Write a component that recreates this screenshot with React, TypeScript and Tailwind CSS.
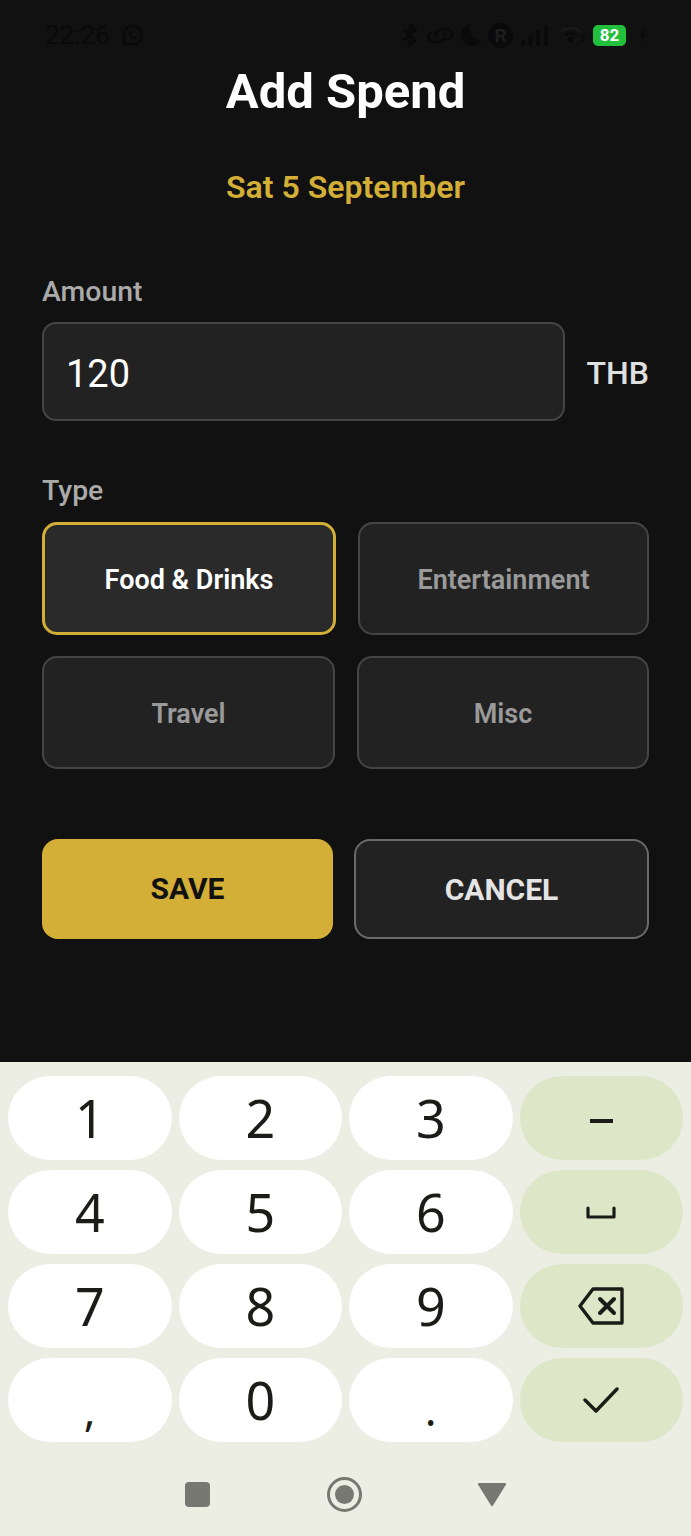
const FONT = "font-['Roboto',sans-serif]";

function StatusBar() {
  return (
    <div className="h-[68px] shrink-0 pl-[45px] pr-[43px] pt-[20px] flex items-start justify-between text-[#0a0a0a]">
      <div className="flex items-center gap-[11px] h-[30px]">
        <span className="text-[26px] leading-none">22:26</span>
        <svg width="22" height="23" viewBox="0 0 24 24" fill="none" stroke="currentColor" strokeWidth="2.6">
          <path d="M2.500 22l1.500-5.500A10 10 0 1 1 7.800 20.400L2.500 22z" />
          <path d="M8.500 7.500c-.5 4.500 3.500 8.500 8 8.500l1-2.500-2.800-1.300-1 1.100c-1.200-.5-2.200-1.500-2.700-2.700l1.100-1-1.300-2.800-2.300.7z" fill="currentColor" stroke="none" />
        </svg>
      </div>
      <div className="flex items-center h-[30px]">
        <svg width="16" height="24" viewBox="0 0 20 30" fill="none" stroke="currentColor" strokeWidth="3.400" className="mr-[9px]">
          <path d="M2 8l15 14-7 6V2l7 6L2 22" strokeLinejoin="round" />
        </svg>
        <svg width="26" height="17" viewBox="0 0 28 18" fill="none" stroke="currentColor" strokeWidth="2.800" strokeLinecap="round" className="mr-[7px]">
          <path d="M9 11c0-5 4-9 9-9h3a5.500 5.500 0 0 1 1 11h-3" />
          <path d="M19 7c1 5-3 9-8 9H7a5.500 5.500 0 0 1-3-10" />
        </svg>
        <svg width="22" height="22" viewBox="0 0 24 24" fill="currentColor" className="mr-[6px]">
          <path d="M11 0a12 12 0 1 0 13 17C15 19 8 9 11 0z" />
        </svg>
        <div className="w-[25px] h-[25px] rounded-full bg-[#0a0a0a] text-[#1e1e1e] text-[19px] font-bold leading-[25px] text-center mr-[8px]">
          R
        </div>
        <svg width="27" height="21" viewBox="0 0 27 21" fill="currentColor" className="mr-[12px]">
          <rect x="0" y="15" width="4" height="6" />
          <rect x="7.500" y="10" width="4" height="11" />
          <rect x="15" y="5" width="4" height="16" />
          <rect x="23" y="0" width="4" height="21" />
        </svg>
        <svg width="27" height="18" viewBox="0 0 28 19" fill="none" stroke="currentColor" className="mr-[6px]">
          <path d="M1 6a15 15 0 0 1 20 0" strokeWidth="2.200" stroke="#1c1c1c" />
          <path d="M5 10a9 9 0 0 1 12 0" strokeWidth="2.600" />
          <path d="M7.500 14l3.500-2.500 3.500 2.500-3.500 3.500z" fill="currentColor" />
          <path d="M21 12l3-3 3 3zM21 14l3 3 3-3z" fill="currentColor" stroke="none" />
        </svg>
        <div className="w-[33px] h-[21px] rounded-[5px] bg-[#22c03c] text-white text-[17px] font-bold leading-[21px] text-center mr-[12px]">
          82
        </div>
        <svg width="10" height="17" viewBox="0 0 11 20" fill="currentColor">
          <path d="M7 0L1 11h3.500L3 20l7-12H6z" />
        </svg>
      </div>
    </div>
  );
}

function TypeButton({ label, selected, className }: { label: string; selected?: boolean; className: string }) {
  return (
    <button
      className={
        "h-[113px] rounded-[15px] pt-[3px] text-[27px] font-semibold flex items-center justify-center " +
        (selected
          ? "border-[3px] border-[#d4af37] bg-[#2a2a2a] text-white "
          : "border-[2px] border-[#454545] bg-[#222222] text-[#9a9a9a] ") +
        className
      }
    >
      {label}
    </button>
  );
}

function Key({ label, dim, children }: { label?: string; dim?: boolean; children?: React.ReactNode }) {
  return (
    <div
      className={
        "h-[84px] rounded-[42px] flex items-center justify-center text-[#1b1c17] font-['Noto_Sans',sans-serif] text-[52px] font-normal " +
        (dim ? "bg-[#dde6c6]" : "bg-white")
      }
    >
      {label}
      {children}
    </div>
  );
}

export default function App() {
  return (
    <div className={"w-[691px] h-[1536px] flex flex-col bg-[#111111] overflow-hidden " + FONT}>
      <StatusBar />

      <div className="flex-1 px-[42px]">
        <h1 className="text-center text-white text-[49px] leading-[48px] font-bold">Add Spend</h1>
        <p className="mt-[53px] text-center text-[#d4af37] text-[32px] leading-[36px] font-semibold">Sat 5 September</p>

        <label className="block mt-[71px] text-[#aaaaaa] text-[28.4px] leading-[32px] font-medium">Amount</label>
        <div className="mt-[14px] flex items-center">
          <div className="w-[523px] h-[99px] rounded-[14px] border-[2px] border-[#454545] bg-[#222222] pl-[22px] pt-[5px] flex items-center text-white text-[38px]">
            120
          </div>
          <span className="ml-[22px] pt-[2px] text-[#e0e0e0] text-[32px] font-medium">THB</span>
        </div>

        <label className="block mt-[54px] text-[#aaaaaa] text-[28.4px] leading-[32px] font-medium">Type</label>
        <div className="mt-[15px] flex gap-[22px]">
          <TypeButton label="Food & Drinks" selected className="w-[294px]" />
          <TypeButton label="Entertainment" className="w-[291px]" />
        </div>
        <div className="mt-[21px] flex gap-[22px]">
          <TypeButton label="Travel" className="w-[293px]" />
          <TypeButton label="Misc" className="w-[292px]" />
        </div>

        <div className="mt-[70px] flex gap-[21px]">
          <button className="w-[291px] h-[100px] rounded-[16px] pb-[2px] bg-[#d4af37] text-[#111111] text-[30px] font-bold">SAVE</button>
          <button className="w-[295px] h-[100px] rounded-[16px] border-[2px] border-[#6a6a6a] bg-[#222222] text-[#e4e4e4] text-[30px] font-bold">
            CANCEL
          </button>
        </div>
      </div>

      {/* keyboard */}
      <div className="h-[474px] shrink-0 bg-[#eceee3] px-[8px] pt-[14px]">
        <div className="grid grid-cols-4 gap-x-[7px] gap-y-[10px]">
          <Key label="1" />
          <Key label="2" />
          <Key label="3" />
          <Key dim>
            <div className="w-[23px] h-[4px] bg-[#1b1c17] mt-[6px]" />
          </Key>
          <Key label="4" />
          <Key label="5" />
          <Key label="6" />
          <Key dim>
            <svg width="30" height="13" viewBox="0 0 30 13" fill="none" stroke="#1b1c17" strokeWidth="3.200" strokeLinecap="round" strokeLinejoin="round" className="mt-[1px]">
              <path d="M2 2v9h26V2" />
            </svg>
          </Key>
          <Key label="7" />
          <Key label="8" />
          <Key label="9" />
          <Key dim>
            <svg width="46" height="38" viewBox="0 0 46 38" fill="none" stroke="#1b1c17" strokeWidth="3.400" strokeLinejoin="round" strokeLinecap="round">
              <path d="M15 2h29v34H15L2 19z" />
              <path d="M22 12l14 14M36 12L22 26" strokeWidth="4" />
            </svg>
          </Key>
          <Key>
            <span className="text-[44px] leading-none mt-[18px]">,</span>
          </Key>
          <Key label="0" />
          <Key>
            <span className="text-[44px] leading-none mt-[18px]">.</span>
          </Key>
          <Key dim>
            <svg width="36" height="28" viewBox="0 0 36 28" fill="none" stroke="#1b1c17" strokeWidth="3.400" strokeLinecap="round" strokeLinejoin="round">
              <path d="M2 14l11 11L34 3" />
            </svg>
          </Key>
        </div>

        {/* nav buttons */}
        <div className="mt-[35px] ml-[177px] flex items-center">
          <div className="w-[25px] h-[25px] rounded-[4px] bg-[#777872]" />
          <div className="ml-[117px] w-[35px] h-[35px] rounded-full border-[3px] border-[#777872] flex items-center justify-center">
            <div className="w-[19px] h-[19px] rounded-full bg-[#777872]" />
          </div>
          <svg width="30" height="25" viewBox="0 0 30 25" fill="#777872" className="ml-[115px]">
            <path d="M2 1h26a1 1 0 0 1 1 1.500L16 23.500a1.200 1.200 0 0 1-2 0L1 2.500A1 1 0 0 1 2 1z" />
          </svg>
        </div>
      </div>
    </div>
  );
}
